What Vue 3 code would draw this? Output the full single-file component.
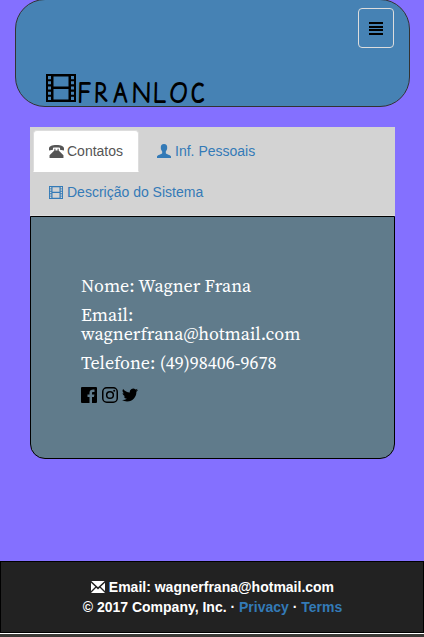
<script setup>
const film = 'M0 0H30V27H0ZM2 2V5H5V2ZM2 7V10H5V7ZM2 12V15H5V12ZM2 17V20H5V17ZM2 22V25H5V22ZM7.5 2.5V12H22.5V2.5ZM7.5 14.5V24.5H22.5V14.5ZM25 2V5H28V2ZM25 7V10H28V7ZM25 12V15H28V12ZM25 17V20H28V17ZM25 22V25H28V22Z'
</script>

<template>
  <div class="page">
    <header class="bar">
      <button class="toggle" aria-label="Menu">
        <svg width="14" height="13" viewBox="0 0 14 13"><path d="M0 0H14V2H0ZM0 4H14V6H0ZM0 7H14V9H0ZM0 11H14V13H0Z" /></svg>
      </button>
      <div class="brand">
        <svg class="reel" width="30" height="28" viewBox="0 0 30 27" preserveAspectRatio="none"><path fill-rule="evenodd" :d="film" /></svg>
        <span class="name">FRANLOC</span>
      </div>
    </header>

    <main class="content">
      <nav class="tabs">
        <a class="tab active">
          <svg width="15" height="13" viewBox="0 0 14 12"><path d="M0 5V3.2C0 1.2 2.5 0 7 0S14 1.2 14 3.2V5L10.3 4.3V2.6C8.5 2 5.5 2 3.7 2.6V4.3ZM5 3.5H6V5H8V3.5H9V5L13.5 9.5V12H.5V9.5L5 5Z" /></svg>
          <span>Contatos</span>
        </a>
        <a class="tab">
          <svg width="14" height="14" viewBox="0 0 14 14"><path d="M7 0C9.3 0 10.4 1.6 10.2 4C10.1 5.8 9.4 6.7 8.8 7.5V9.2C9.1 10 13.7 11 14 12.4V14H0V12.4C.3 11 4.9 10 5.2 9.2V7.5C4.6 6.7 3.9 5.8 3.8 4C3.6 1.6 4.7 0 7 0Z" /></svg>
          <span>Inf. Pessoais</span>
        </a>
        <a class="tab">
          <svg width="14" height="13" viewBox="0 0 30 27" preserveAspectRatio="none"><path fill-rule="evenodd" :d="film" /></svg>
          <span>Descrição do Sistema</span>
        </a>
      </nav>
      <section class="panel">
        <p>Nome: Wagner Frana</p>
        <p>Email:<br>wagnerfrana@hotmail.com</p>
        <p>Telefone: (49)98406-9678</p>
        <div class="social">
          <svg width="16" height="16" viewBox="0 0 16 16"><path d="M1 0H15Q16 0 16 1V15Q16 16 15 16H11V10H13L13.4 7.5H11V6C11 5.2 11.4 4.9 12.2 4.9H13.5V2.5C10.5 2.2 8.5 3 8.5 5.8V7.5H6.5V10H8.5V16H1Q0 16 0 15V1Q0 0 1 0Z" /></svg>
          <svg width="16" height="16" viewBox="0 0 16 16"><g fill="none" stroke="#000" stroke-width="1.5"><rect x=".75" y=".75" width="14.5" height="14.5" rx="4" /><circle cx="8" cy="8" r="3.35" /></g><circle cx="12.2" cy="3.8" r="1" /></svg>
          <svg width="16" height="14" viewBox="0 1.5 16 13"><path d="M16 3.04c-.59.26-1.22.44-1.89.52.68-.41 1.2-1.05 1.45-1.82-.64.38-1.34.65-2.09.8A3.28 3.28 0 0 0 7.88 5.53 9.32 9.32 0 0 1 1.11 2.1a3.28 3.28 0 0 0 1.02 4.38 3.27 3.27 0 0 1-1.49-.41v.04c0 1.59 1.13 2.92 2.63 3.22a3.3 3.3 0 0 1-1.48.06 3.29 3.29 0 0 0 3.07 2.28A6.59 6.59 0 0 1 0 13.03a9.29 9.29 0 0 0 5.03 1.47c6.04 0 9.34-5 9.34-9.33v-.43A6.67 6.67 0 0 0 16 3.04Z" /></svg>
        </div>
      </section>
    </main>

    <footer class="foot">
      <div><svg width="14" height="12" viewBox="0 0 14 12"><path d="M.3 0H13.7L7 6.2ZM0 1.7L4.3 5.8 0 10ZM14 1.7V10L9.7 5.8ZM5.2 6.8L7 8.5 8.8 6.8 14 12H0Z" /></svg> Email: wagnerfrana@hotmail.com</div>
      <div>© 2017 Company, Inc. · <a>Privacy</a> · <a>Terms</a></div>
    </footer>
    <div class="edge"></div>
  </div>
</template>

<style>
body { margin: 0; background: #8470ff; }
</style>

<style scoped>
* { box-sizing: border-box; }
.page { height: 637px; overflow: hidden; display: flex; flex-direction: column; background: #8470ff; font: 14px/20px "Liberation Sans", Arial, sans-serif; }
svg { fill: currentColor; flex: none; }
.bar { height: 108px; flex: none; margin: -1px 14px 0 15px; border: 1px solid #333; border-radius: 30px; background: #4682b4; display: flex; flex-direction: column; }
.toggle { align-self: flex-end; width: 36px; height: 40px; margin: 8px 15px 0 0; padding: 0; display: flex; align-items: center; justify-content: center; background: transparent; border: 1px solid #ddd; border-radius: 4px; color: #000; }
.brand { display: flex; align-items: flex-end; margin: 26px 0 0 30px; height: 28px; color: #000; }
.name { margin-left: 1px; height: 28px; letter-spacing: 3px; font: 300 26px/38px "Comic Sans MS", "Comic Relief", Lato, sans-serif; transform: scaleX(.91); transform-origin: 0 0; }
.content { margin: 20px 29px 0 30px; height: 332px; flex: none; display: flex; flex-direction: column; }
.tabs { height: 89px; padding: 3px 3px 0; display: flex; flex-wrap: wrap; align-content: flex-start; background: #d3d3d3; border-bottom: 1px solid #ddd; }
.tab { display: flex; align-items: center; gap: 4px; height: 42px; margin: 0 2px -1px 0; padding: 0 15px; border: 1px solid transparent; border-radius: 4px 4px 0 0; color: #337ab7; }
.active { gap: 3px; background: #fff; border-color: #ddd; border-bottom-color: #fff; color: #555; }
.panel { height: 243px; padding: 59px 50px 0; border: 1px solid #000; border-radius: 0 0 15px 15px; background: #607b8b; color: #fff; font: 18px/19px "Source Serif Pro", "Source Serif 4", "Noto Serif CJK SC", "Noto Serif CJK JP", "Liberation Serif", serif; }
.panel p { margin: 0 0 10px; white-space: nowrap; }
.social { display: flex; align-items: center; gap: 5px; height: 16px; margin-top: 15px; color: #000; }
.social svg { margin-right: -0.3px; }
.foot { flex: none; margin-top: 102px; height: 72px; padding: 15px 0 0 1px; border: 1px solid #000; background: #222; color: #fff; font-weight: bold; text-align: center; }
.foot svg { vertical-align: -1px; }
.foot a { color: #337ab7; }
.edge { flex: none; height: 4px; border-top: 1px solid #fff; background: #3c3b37; }
</style>
